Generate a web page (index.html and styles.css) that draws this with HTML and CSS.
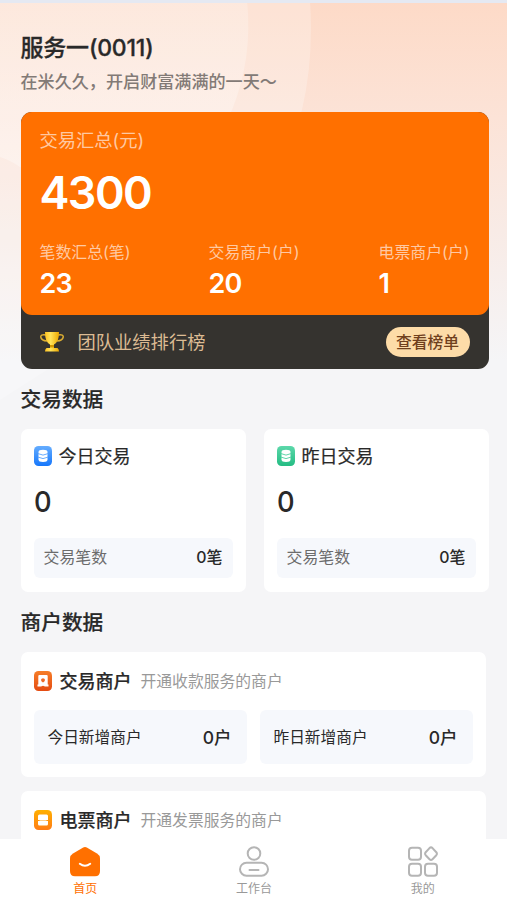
FILE: index.html
```html
<!DOCTYPE html>
<html lang="zh-CN">
<head>
<meta charset="utf-8">
<meta name="viewport" content="width=device-width, initial-scale=1">
<title>首页</title>
<link rel="stylesheet" href="styles.css">
</head>
<body>
<div class="app">
  <svg class="backdrop" viewBox="0 0 507 420" preserveAspectRatio="none" aria-hidden="true">
    <defs>
      <linearGradient id="bg" x1="0" y1="0" x2="0" y2="1">
        <stop offset="0" stop-color="#fddac7"/>
        <stop offset=".28" stop-color="#fce3d7"/>
        <stop offset=".55" stop-color="#f8ebe6"/>
        <stop offset=".86" stop-color="#f5f5f7"/>
      </linearGradient>
      <linearGradient id="glow" x1="0" y1="0" x2="0" y2="1">
        <stop offset="0" stop-color="#fff" stop-opacity=".2"/>
        <stop offset="1" stop-color="#fff" stop-opacity=".35"/>
      </linearGradient>
    </defs>
    <rect width="507" height="420" fill="url(#bg)"/>
    <path d="M0 0H310Q314 58 302 110L250 240L0 400Z" fill="#fff" opacity=".24"/>
    <path d="M0 0H247Q253 58 232 110L170 220L20 167Q10 160 0 157Z" fill="url(#glow)"/>
    <rect width="507" height="3" fill="#e5e9f2"/>
  </svg>
  <main class="content">
    <header class="greeting">
      <h1>服务一(0011)</h1>
      <p>在米久久，开启财富满满的一天～</p>
    </header>

    <section class="summary">
      <div class="summary-main">
        <div class="summary-label">交易汇总(元)</div>
        <div class="summary-total">4300</div>
        <div class="stats">
          <div><span>笔数汇总(笔)</span><b>23</b></div>
          <div><span>交易商户(户)</span><b>20</b></div>
          <div><span>电票商户(户)</span><b>1</b></div>
        </div>
      </div>
      <div class="ranking">
        <svg class="trophy" viewBox="0 0 24 22" width="24" height="22">
          <defs><linearGradient id="gold" x1="0" x2="1"><stop offset="0" stop-color="#ffc21f"/><stop offset=".4" stop-color="#ffe35a"/><stop offset="1" stop-color="#eda900"/></linearGradient></defs>
          <path d="M6 4Q0 3 .9 6.500Q1.500 9.500 7 10M18 4Q24 3 23.100 6.500Q22.500 9.500 17 10" fill="none" stroke="#dcae32" stroke-width="1.500"/>
          <path d="M5 1H19Q19 11 14 13.500V17H17.500Q19 18 19 20.500H5Q5 18 6.500 17H10V13.500Q5 11 5 1Z" fill="url(#gold)"/>
          <path d="M10 14H14V16.500H10Z" fill="#d39800"/>
        </svg>
        <span class="ranking-title">团队业绩排行榜</span>
        <button class="ranking-button">查看榜单</button>
      </div>
    </section>

    <h2 class="trade-title">交易数据</h2>
    <section class="trade-grid">
      <article class="card trade-card">
        <div class="card-head">
          <svg viewBox="0 0 18 20" width="18" height="20">
            <defs><linearGradient id="blue" x1="0" y1="0" x2="0" y2="1"><stop stop-color="#65adff"/><stop offset="1" stop-color="#1677fb"/></linearGradient></defs>
            <rect width="18" height="20" rx="4.500" fill="url(#blue)"/>
            <path d="M4.500 6Q4.500 3.800 9 3.800T13.500 6V13.500Q13.500 16 9 16T4.500 13.500Z" fill="#fff"/>
            <path d="M4 7.600Q9 10.600 14 7.600M4 11.100Q9 14.100 14 11.100" fill="none" stroke="#58a3fd" stroke-width=".9"/>
          </svg>
          <h3>今日交易</h3>
        </div>
        <div class="amount">0</div>
        <div class="count-row"><span>交易笔数</span><b>0笔</b></div>
      </article>
      <article class="card trade-card">
        <div class="card-head">
          <svg viewBox="0 0 18 20" width="18" height="20">
            <defs><linearGradient id="green" x1="0" y1="0" x2="0" y2="1"><stop stop-color="#5cd8aa"/><stop offset="1" stop-color="#24bc83"/></linearGradient></defs>
            <rect width="18" height="20" rx="4.500" fill="url(#green)"/>
            <path d="M4.500 6Q4.500 3.800 9 3.800T13.500 6V13.500Q13.500 16 9 16T4.500 13.500Z" fill="#fff"/>
            <path d="M4 7.600Q9 10.600 14 7.600M4 11.100Q9 14.100 14 11.100" fill="none" stroke="#4fcfa0" stroke-width=".9"/>
          </svg>
          <h3>昨日交易</h3>
        </div>
        <div class="amount">0</div>
        <div class="count-row"><span>交易笔数</span><b>0笔</b></div>
      </article>
    </section>

    <h2 class="merchant-title">商户数据</h2>
    <section class="merchants">
      <article class="card merchant-card">
        <div class="card-head">
          <svg viewBox="0 0 18 20" width="18" height="20">
            <defs><linearGradient id="red" x1="0" y1="0" x2="0" y2="1"><stop stop-color="#f67d28"/><stop offset="1" stop-color="#e44b12"/></linearGradient></defs>
            <rect width="18" height="20" rx="4.500" fill="url(#red)"/>
            <path d="M5.500 4H12.500Q13.700 4 13.700 5V13.500H14.500V15.500H11L9 14.700L7 15.500H3.500V13.500H4.300V5Q4.300 4 5.500 4Z" fill="#fff"/>
            <path d="M7.200 8L9 7.200L10.800 8V9.500Q10.800 10.700 9 11.600Q7.200 10.700 7.200 9.500Z" fill="#ed6a28"/>
          </svg>
          <h3>交易商户</h3><span class="note">开通收款服务的商户</span>
        </div>
        <div class="new-grid">
          <div><span>今日新增商户</span><b>0户</b></div>
          <div><span>昨日新增商户</span><b>0户</b></div>
        </div>
      </article>
      <article class="card merchant-card">
        <div class="card-head">
          <svg viewBox="0 0 18 20" width="18" height="20">
            <defs><linearGradient id="amber" x1="0" y1="0" x2="0" y2="1"><stop stop-color="#ffb000"/><stop offset="1" stop-color="#ff7c16"/></linearGradient></defs>
            <rect width="18" height="20" rx="4.500" fill="url(#amber)"/>
            <path d="M5.500 4.500H12.500Q14 4.500 14 6V10H4V6Q4 4.500 5.500 4.500ZM4 11H14V14Q14 15.500 12.500 15.500H5.500Q4 15.500 4 14Z" fill="#fff"/>
            <path d="M5.500 10.500H12.500" stroke="#ffcf87" stroke-width="1"/>
          </svg>
          <h3>电票商户</h3><span class="note">开通发票服务的商户</span>
        </div>
      </article>
    </section>
  </main>

  <nav class="tabs">
    <a class="tab active">
      <svg viewBox="0 0 32 32" width="32" height="32">
        <path d="M13.800 1.700Q16 .4 18.200 1.700L28 7.500Q31 9.300 31 12.400V25Q31 30.300 26 30.300H6Q1 30.300 1 25V12.400Q1 9.300 4 7.500Z" fill="#ff7000"/>
        <path d="M10.800 17.800Q16 21.800 21.200 17.800" fill="none" stroke="#fff" stroke-width="2" stroke-linecap="round"/>
      </svg>
      <span>首页</span>
    </a>
    <a class="tab">
      <svg viewBox="0 0 32 32" width="32" height="32" fill="none" stroke="#b5b5b5" stroke-width="2" stroke-linecap="round">
        <circle cx="16" cy="7.500" r="6.300"/>
        <rect x="2" y="16.700" width="28" height="13" rx="6.500"/>
        <path d="M11.500 23.900H20.500"/>
      </svg>
      <span>工作台</span>
    </a>
    <a class="tab">
      <svg viewBox="0 0 32 32" width="32" height="32" fill="none" stroke="#b5b5b5" stroke-width="2" stroke-linejoin="round">
        <rect x="2" y="1.700" width="12" height="12" rx="3"/>
        <path d="M22.500 2.100Q24 .7 25.500 2.100L29.300 6.200Q30.500 7.700 29.300 9.200L25.500 13.200Q24 14.600 22.500 13.200L18.700 9.200Q17.500 7.700 18.700 6.200Z"/>
        <rect x="2" y="17.700" width="12" height="12" rx="3"/>
        <rect x="18" y="17.700" width="12" height="12" rx="3"/>
      </svg>
      <span>我的</span>
    </a>
  </nav>
</div>
</body>
</html>
```
FILE: styles.css
```css
* { box-sizing: border-box; }

body {
  margin: 0;
  background: #f5f5f7;
  color: #292929;
  font-family: Inter, "Noto Sans CJK SC", sans-serif;
}

h1, h2, h3, p { margin: 0; font-weight: 500; }
b { font-weight: 600; }

.app {
  position: relative;
  display: flex;
  flex-direction: column;
  width: 507px;
  height: 900px;
  overflow: hidden;
}

.backdrop {
  position: absolute;
  top: 0;
  left: 0;
  width: 507px;
  height: 420px;
}

.content {
  position: relative;
  flex: 1;
  min-height: 0;
  overflow: hidden;
  padding: 33px 18.5px 0 20.5px;
}

.greeting h1 { font-size: 23px; line-height: 30px; letter-spacing: -0.2px; white-space: nowrap; -webkit-text-stroke: 0.3px; }
.greeting p { margin-top: 7px; font-size: 17.1px; line-height: 24px; color: #827a76; white-space: nowrap; }

.summary {
  margin-top: 18px;
  height: 257px;
  border-radius: 11px;
  background: #35332f;
}

.summary-main {
  height: 203px;
  padding: 16px 19px 0;
  border-radius: 11px;
  background: #ff7000;
  color: #fff;
}

.summary-label { font-size: 18.3px; line-height: 24px; color: #ffc9a2; }
.summary-total { margin-top: 12px; font-size: 45px; line-height: 58px; font-weight: 600; letter-spacing: -1.6px; }

.stats { display: grid; grid-template-columns: 169px 170px 1fr; margin-top: 20px; white-space: nowrap; }
.stats span { display: block; font-size: 15.9px; line-height: 22px; color: #ffc9a2; }
.stats b { display: block; margin-top: 3px; font-size: 27px; line-height: 34px; letter-spacing: -0.8px; }

.ranking { display: flex; align-items: center; height: 54px; padding: 0 19px; }
.ranking-title { margin-left: 14px; margin-top: -2px; font-size: 18.3px; color: #dcbb93; }

.ranking-button {
  width: 84px;
  height: 30px;
  margin-left: auto;
  padding: 0;
  border: 0;
  border-radius: 15px;
  background: #fddca8;
  color: #70401d;
  font: 500 15.8px/30px "Noto Sans CJK SC", sans-serif;
}

h2 { font-size: 20.7px; line-height: 30px; -webkit-text-stroke: 0.2px; }
.trade-title { padding-top: 1px; margin-top: 15px; }
.merchant-title { padding-top: 1px; margin-top: 15px; }

.card { border-radius: 7px; background: #fff; }
.card-head { display: flex; align-items: center; height: 26px; }
.card-head svg { flex: none; }
.card-head h3 { margin-left: 7px; padding-top: 2px; font-size: 18px; line-height: 26px; }

.trade-grid { display: grid; grid-template-columns: 225px 225px; gap: 18px; margin-top: 14px; }
.trade-card { height: 163px; padding: 14px 13px; }
.trade-card h3 { font-weight: 400; -webkit-text-stroke: 0.2px; }
.amount { margin-top: 14px; font-size: 29px; line-height: 38px; font-weight: 500; transform: scaleX(0.94); transform-origin: left; }

.count-row {
  display: flex;
  align-items: center;
  justify-content: space-between;
  height: 40px;
  margin-top: 17px;
  padding: 0 10px;
  border-radius: 6px;
  background: #f6f8fc;
  font-size: 15.9px;
  line-height: 22px;
}
.count-row span { color: #6c6c6c; }
.count-row b { font-weight: 500; }

.merchants { display: grid; gap: 14px; width: 465px; margin-top: 14px; }
.merchant-card { height: 125px; padding: 16px 13px; }
.merchant-card h3 { margin-left: 8px; -webkit-text-stroke: 0.2px; }
.note { margin-left: 9px; margin-top: -2px; font-size: 15.8px; color: #999; }

.new-grid { display: grid; grid-template-columns: 213px 213px; gap: 13px; margin-top: 16px; }
.new-grid div {
  display: flex;
  align-items: center;
  justify-content: space-between;
  height: 54px;
  padding: 0 15px 2px 14px;
  border-radius: 6px;
  background: #f6f8fc;
}
.new-grid span { font-size: 15.7px; }
.new-grid b { font-size: 17.5px; font-weight: 500; }

.tabs {
  position: relative;
  display: grid;
  grid-template-columns: repeat(3, 1fr);
  height: 61px;
  padding-top: 7px;
  padding-left: 1px;
  background: #fff;
}
.tab { display: flex; flex-direction: column; align-items: center; color: #999; }
.tab span { margin-top: 3px; font-size: 12px; line-height: 16px; }
.tab.active { color: #ff7000; }
```
